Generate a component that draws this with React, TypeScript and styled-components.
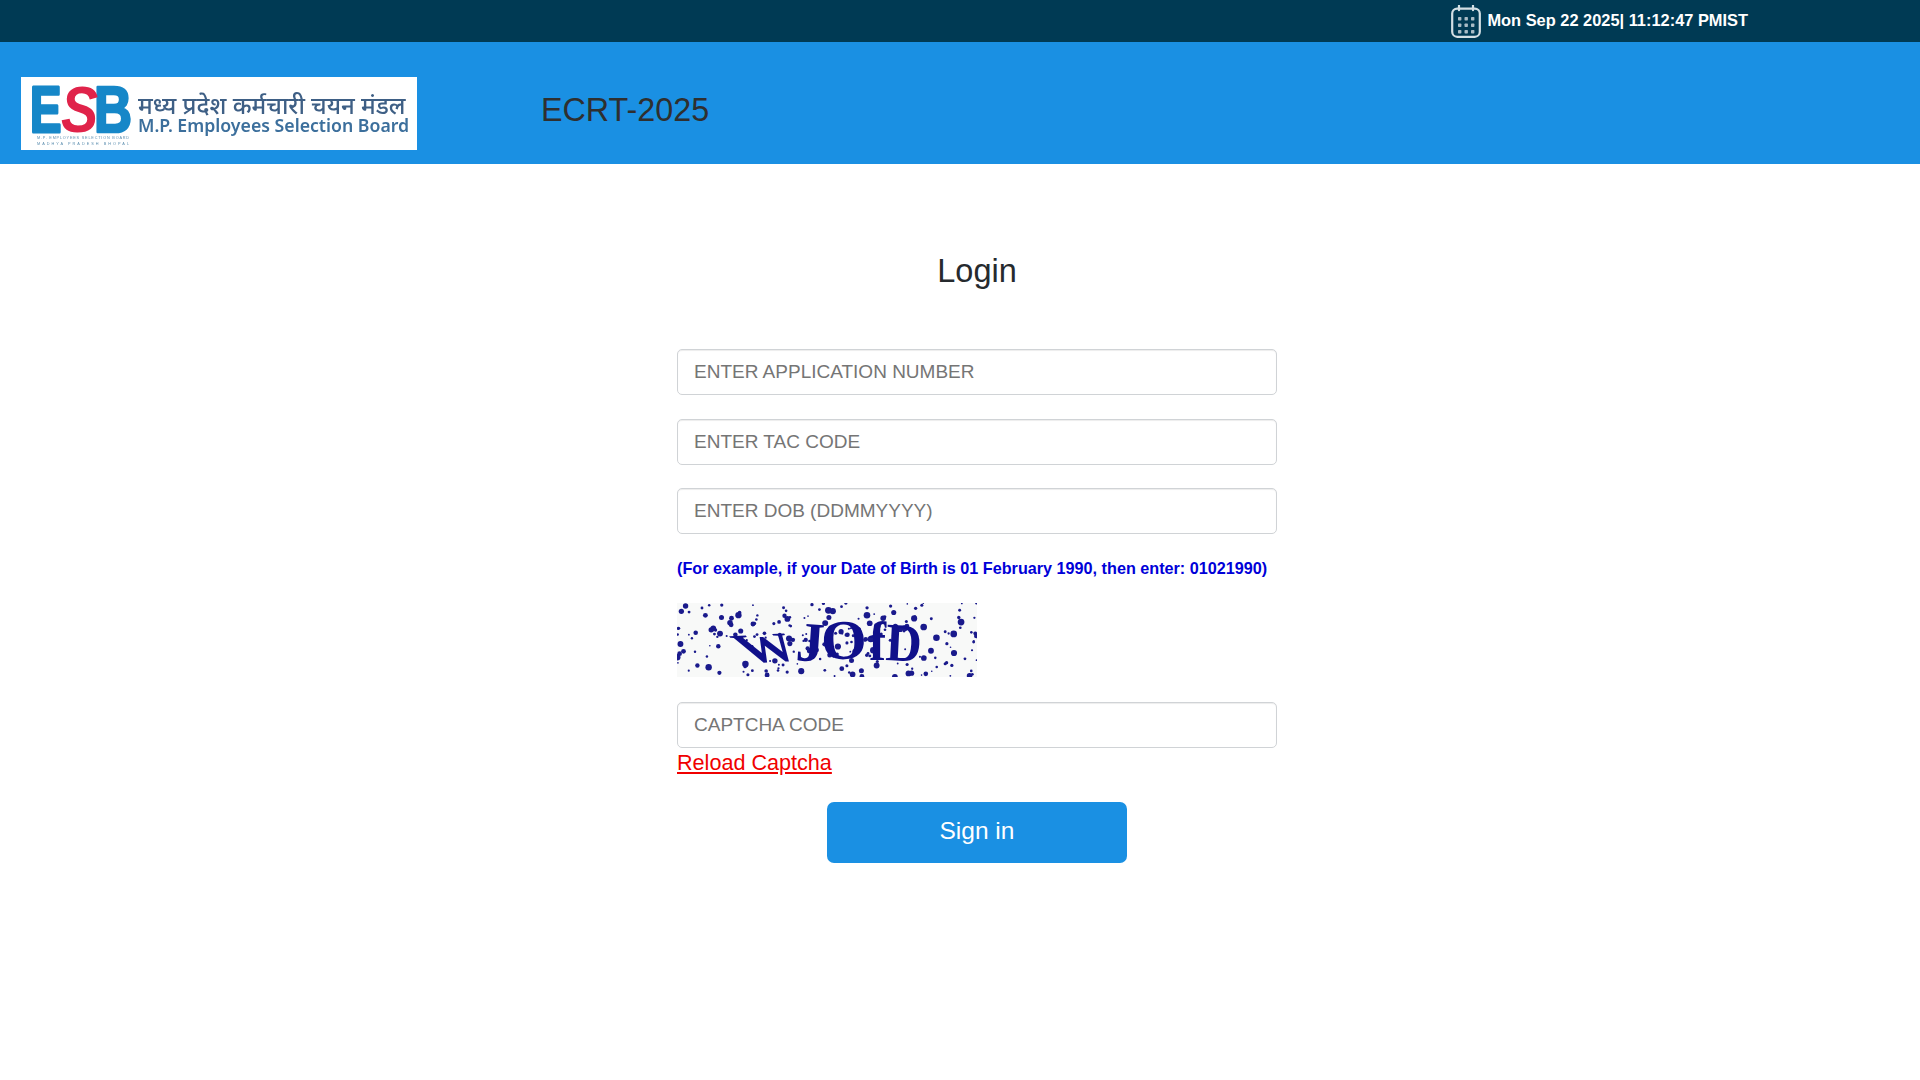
import React from 'react';
import styled, { createGlobalStyle } from 'styled-components';

const dots: number[][] = [];
let seed = 74;
const rnd = () => {
  seed = (seed * 16807) % 2147483647;
  return seed / 2147483647;
};
for (let i = 0; i < 230; i++) {
  dots.push([rnd() * 300, rnd() * 74, rnd() < 0.6 ? 0.8 + rnd() * 0.9 : 1.8 + rnd() * 1.6]);
}

const FIELDS_TOP = ['ENTER APPLICATION NUMBER', 'ENTER TAC CODE', 'ENTER DOB (DDMMYYYY)'];

const CAPTCHA_LETTERS = [
  { ch: 'W', size: 54, tr: 'translate(70 60) rotate(-3) skewX(32) scale(1.05 0.78)' },
  { ch: 'J', size: 56, tr: 'translate(118 57) rotate(4) scale(1 1)' },
  { ch: 'O', size: 56, tr: 'translate(145 57) rotate(-3) scale(1.05 1)' },
  { ch: 'f', size: 54, tr: 'translate(192 57) scale(0.95 1)' },
  { ch: 'D', size: 54, tr: 'translate(208 57) rotate(3) scale(0.92 1)' },
];

function CalendarIcon() {
  return (
    <svg width="30" height="33" viewBox="0 0 30 33" fill="none" stroke="#d3dfe4" strokeWidth="2.2">
      <rect x="1.2" y="3.6" width="27.6" height="28.2" rx="5" />
      <path d="M8 0.6v4.6M22 0.6v4.6" strokeLinecap="round" />
      <g fill="#a9bcc6" stroke="none">
        {[12, 18.5, 25].map((y) =>
          [7, 13.5, 20].map((x) => <rect key={`${x}-${y}`} x={x} y={y} width="3.4" height="3.4" rx="0.7" />)
        )}
      </g>
    </svg>
  );
}

function LogoMark() {
  const font = "'Liberation Sans', sans-serif";
  return (
    <LogoSvg width="106" height="73" viewBox="0 0 106 73">
      <text fontFamily={font} fontWeight="700" fontSize="62" fill="#1687c8" stroke="#1687c8" strokeWidth="3" strokeLinejoin="round" transform="translate(0 55) scale(0.76 1.05)">E</text>
      <text fontFamily={font} fontWeight="700" fontSize="62" fill="#1687c8" stroke="#1687c8" strokeWidth="2.5" strokeLinejoin="round" transform="translate(64 55) scale(0.85 1.05)">B</text>
      <text fontFamily={font} fontWeight="700" fontStyle="italic" fontSize="62" fill="#e0234a" transform="translate(31 55) scale(0.9 1.05)">S</text>
      <text x="7" y="62" fontFamily={font} fontSize="3.8" fill="#5d8fb0" textLength="92">M.P. EMPLOYEES SELECTION BOARD</text>
      <text x="7" y="67.5" fontFamily={font} fontSize="3.8" fill="#5d8fb0" textLength="92">MADHYA PRADESH BHOPAL</text>
    </LogoSvg>
  );
}

function CaptchaImage() {
  return (
    <svg width="300" height="74" viewBox="0 0 300 74">
      <rect width="300" height="74" fill="#f8f9f8" />
      {dots.map(([x, y, r], i) => (
        <circle key={i} cx={x} cy={y} r={r} fill="#1a1a8c" />
      ))}
      {CAPTCHA_LETTERS.map((l) => (
        <text
          key={l.ch}
          fontFamily="'Liberation Serif', serif"
          fontWeight="700"
          fontSize={l.size}
          fill="#10108a"
          transform={l.tr}
        >
          {l.ch}
        </text>
      ))}
    </svg>
  );
}

export default function App() {
  return (
    <>
      <Global />
      <TopBar>
        <Clock>
          <CalendarIcon />
          <ClockText>Mon Sep 22 2025| 11:12:47 PMIST</ClockText>
        </Clock>
      </TopBar>
      <Header>
        <Logo>
          <LogoMark />
          <LogoText>
            <LogoHindi>मध्य प्रदेश कर्मचारी चयन मंडल</LogoHindi>
            <LogoEnglish>M.P. Employees Selection Board</LogoEnglish>
          </LogoText>
        </Logo>
        <ExamTitle>ECRT-2025</ExamTitle>
      </Header>
      <Main>
        <Heading>Login</Heading>
        <Form>
          {FIELDS_TOP.map((label) => (
            <Input key={label} placeholder={label} />
          ))}
          <Hint>(For example, if your Date of Birth is 01 February 1990, then enter: 01021990)</Hint>
          <Captcha>
            <CaptchaImage />
          </Captcha>
          <CaptchaGroup>
            <Input placeholder="CAPTCHA CODE" />
            <ReloadLink href="#">Reload Captcha</ReloadLink>
          </CaptchaGroup>
          <SignIn type="button">Sign in</SignIn>
        </Form>
      </Main>
    </>
  );
}

const Global = createGlobalStyle`
  * {
    box-sizing: border-box;
  }
  body {
    margin: 0;
    background: #fff;
    font-family: "Liberation Sans", Arial, sans-serif;
    color: #212529;
  }
`;

const TopBar = styled.div`
  height: 42px;
  background: #003a54;
  display: flex;
  justify-content: flex-end;
  padding-right: 172px;
`;

const Clock = styled.div`
  display: flex;
  align-items: center;
  gap: 6px;
  height: 42px;
`;

const ClockText = styled.span`
  color: #fff;
  font-size: 16.4px;
  font-weight: 700;
  margin-top: -1px;
`;

const Header = styled.header`
  height: 122px;
  background: #1a90e3;
  display: flex;
  padding: 35px 0 0 21px;
`;

const Logo = styled.div`
  width: 396px;
  height: 73px;
  background: #fff;
  display: flex;
  align-items: center;
  gap: 2px;
  padding: 0 6px 0 9px;
  filter: blur(0.4px);
`;

const LogoSvg = styled.svg`
  overflow: visible;
  flex-shrink: 0;
`;

const LogoText = styled.div`
  display: flex;
  flex-direction: column;
  align-items: flex-start;
`;

const LogoHindi = styled.span`
  font-family: "Noto Sans", "Liberation Sans", sans-serif;
  font-size: 24px;
  line-height: 22px;
  font-weight: 500;
  color: #3e5f85;
  white-space: nowrap;
`;

const LogoEnglish = styled.span`
  font-family: "Noto Sans", sans-serif;
  font-size: 17.7px;
  line-height: 18px;
  font-weight: 600;
  color: #3c6f9c;
  white-space: nowrap;
`;

const ExamTitle = styled.h1`
  margin: 13px 0 0 124px;
  font-size: 32.3px;
  line-height: 40px;
  font-weight: 400;
  color: #2f2f2f;
`;

const Main = styled.main`
  display: flex;
  flex-direction: column;
  align-items: center;
  padding-left: 34px;
`;

const Heading = styled.h2`
  margin: 87px 0 0;
  font-size: 32.5px;
  line-height: 41px;
  font-weight: 400;
  color: #262a2e;
`;

const Form = styled.form`
  width: 600px;
  margin-top: 57px;
  display: flex;
  flex-direction: column;
  gap: 23.5px;
`;

const Input = styled.input`
  display: block;
  width: 100%;
  height: 46px;
  padding: 0 16px;
  border: 1px solid #d0d3d6;
  border-radius: 5px;
  box-shadow: inset 0 1px 1px rgba(0, 0, 0, 0.075);
  font-family: inherit;
  font-size: 19px;
  background: #fff;
  color: #495057;
  &::placeholder {
    color: #757575;
    opacity: 1;
  }
`;

const Hint = styled.div`
  color: #0000d8;
  font-size: 16.2px;
  font-weight: 700;
  line-height: 20px;
`;

const Captcha = styled.div`
  height: 74px;
  margin-top: 2px;
  svg {
    display: block;
    filter: blur(0.35px);
  }
`;

const CaptchaGroup = styled.div`
  display: flex;
  flex-direction: column;
  align-items: flex-start;
  margin-top: 1px;
`;

const ReloadLink = styled.a`
  color: #f00000;
  font-size: 21.6px;
  line-height: 30px;
`;

const SignIn = styled.button`
  align-self: center;
  width: 300px;
  height: 61px;
  border: 0;
  border-radius: 7px;
  background: #1a90e3;
  color: #fff;
  font-family: inherit;
  font-size: 24.5px;
  margin-top: 1px;
  padding: 0 0 4px;
`;
